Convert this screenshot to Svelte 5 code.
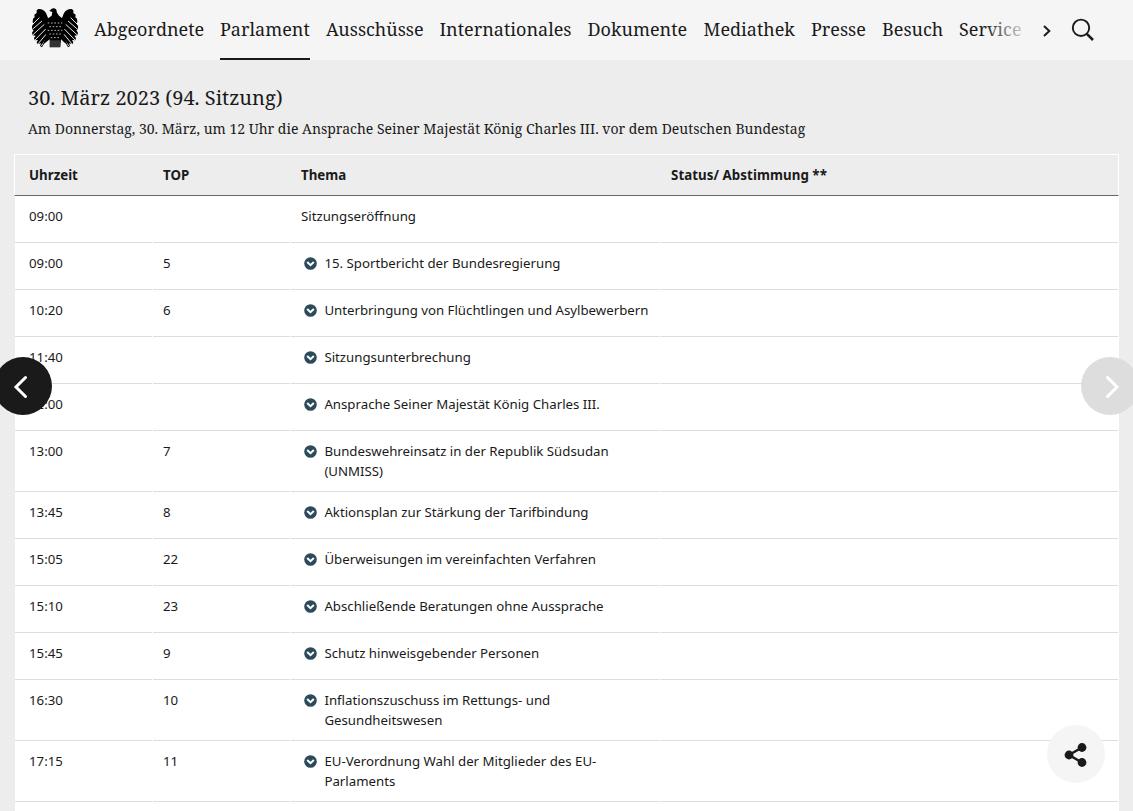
<script>
  const nav = [
    ['Abgeordnete', 110], ['Parlament', 90], ['Ausschüsse', 97.5], ['Internationales', 132],
    ['Dokumente', 100], ['Mediathek', 91.5], ['Presse', 55], ['Besuch', 61], ['Service', 63]
  ];
  const rows = [
    ['09:00', '', 'Sitzungseröffnung', false],
    ['09:00', '5', '15. Sportbericht der Bundesregierung', true],
    ['10:20', '6', 'Unterbringung von Flüchtlingen und Asylbewerbern', true],
    ['11:40', '', 'Sitzungsunterbrechung', true],
    ['12:00', '', 'Ansprache Seiner Majestät König Charles III.', true],
    ['13:00', '7', 'Bundeswehreinsatz in der Republik Südsudan (UNMISS)', true],
    ['13:45', '8', 'Aktionsplan zur Stärkung der Tarifbindung', true],
    ['15:05', '22', 'Überweisungen im vereinfachten Verfahren', true],
    ['15:10', '23', 'Abschließende Beratungen ohne Aussprache', true],
    ['15:45', '9', 'Schutz hinweisgebender Personen', true],
    ['16:30', '10', 'Inflationszuschuss im Rettungs- und Gesundheitswesen', true],
    ['17:15', '11', 'EU-Verordnung Wahl der Mitglieder des EU-Parlaments', true],
    ['', '', '', false]
  ];
</script>

<div class="page">
  <header>
    <svg class="eagle" viewBox="0 0 138 120" width="46" height="40" aria-label="Deutscher Bundestag">
      <g id="wing">
        <path d="M19 3Q34 2 42 15L48 30L50 60L46 84L37 105L30 118L24 114L27 106L17 109L14 103L18 96L8 97L6 90L11 83L2 82L0 74L5 67L0 65L0 54L4 48L2 42L3 32L8 28L7 20L14 15L14 7Z" />
        <path d="M3 48L22 29M0 65L30 39M2 81L37 49M8 97L41 63M17 109L42 79M28 114L40 96" stroke="#f5f5f5" stroke-width="2.8" fill="none" />
      </g>
      <use href="#wing" transform="translate(138 0) scale(-1 1)" />
      <path d="M52 9L59 2Q67-2 73 5L75 14L81 23L94 34L94 83L101 97L107 110L96 103L87 94L85 118H53V94L42 103L32 110L42 85L44 34L59 23L61 12Z" />
      <path d="M47 45H91M52 56H89M47 67H91M52 78H87M56 89H84" stroke="#d8d8d8" stroke-width="2.4" stroke-dasharray="5 5" />
      <path d="M57 97V118M63 97V118M69 97V118M75 97V118M81 97V118" stroke="#999" stroke-width="2" />
    </svg>
    <nav>
      {#each nav as [label, width], i}
        <a class:active={i === 1} style:width="{width}px" href="#top">{label}</a>
      {/each}
      <span class="fade"></span>
    </nav>
    <svg class="more" width="10" height="14" viewBox="0 0 10 14"><path d="M2 2L7.3 7L2 12" /></svg>
    <svg class="search" width="24" height="24" viewBox="0 0 24 24"><circle cx="10" cy="9.8" r="8.2" /><path d="M15.8 15.8L22 22" stroke-width="2.5" /></svg>
  </header>

  <main>
    <h1>30. März 2023 (94. Sitzung)</h1>
    <p class="intro">Am Donnerstag, 30. März, um 12 Uhr die Ansprache Seiner Majestät König Charles III. vor dem Deutschen Bundestag</p>
    <div class="table">
      <div class="row head"><b>Uhrzeit</b><b>TOP</b><b>Thema</b><b>Status/ Abstimmung **</b></div>
      {#each rows as [time, top, topic, link]}
        <div class="row">
          <div>{time}</div>
          <div>{top}</div>
          <div class:topic={link}>
            {#if link}
              <svg width="13" height="13" viewBox="0 0 13 13"><circle cx="6.5" cy="6.5" r="6.3" fill="#2c4a5a" /><path d="M3.2 5L6.5 8.2L9.8 5" /></svg>
            {/if}
            <span>{topic}</span>
          </div>
          <div></div>
        </div>
      {/each}
    </div>
  </main>

  <button class="round prev" aria-label="Zurück"><svg width="16" height="24" viewBox="0 0 16 24"><path d="M12.5 2.5L3 12L12.5 21.5" /></svg></button>
  <button class="round next" aria-label="Weiter"><svg width="16" height="24" viewBox="0 0 16 24"><path d="M3.5 2.5L13 12L3.5 21.5" /></svg></button>
  <button class="round share" aria-label="Teilen"><svg width="24" height="26" viewBox="0 0 24 26"><path d="M18 5.5L5 13L18 20.5" /><circle cx="18" cy="5.5" r="4.4" /><circle cx="5" cy="13" r="4.4" /><circle cx="18" cy="20.5" r="4.4" /></svg></button>
</div>

<style>
  :global(body) { margin: 0; overflow: hidden; }
  .page { position: relative; height: 811px; overflow: hidden; background: #ededed; color: #1a1a1a; font: 13.24px/20px "Noto Sans", sans-serif; }
  header { height: 60px; background: #f5f5f5; display: flex; align-items: center; }
  .eagle { margin: -4px 0 0 32px; flex: none; }
  nav { position: relative; display: flex; gap: 16px; margin-left: 16px; height: 60px; width: 927px; overflow: hidden; }
  nav a { box-sizing: border-box; flex: none; height: 60px; color: inherit; text-decoration: none; white-space: nowrap; font: 18px/58px "Noto Serif", "Droid Serif", "DejaVu Serif Condensed", "DejaVu Serif", serif; }
  .active { border-bottom: 2px solid #1a1a1a; }
  .fade { position: absolute; right: -10px; top: 0; width: 48px; height: 60px; background: linear-gradient(90deg, #f5f5f500, #f5f5f5); }
  .more { margin: 2px 0 0 21px; fill: none; stroke: #1a1a1a; stroke-width: 2; }
  .search { margin-left: 19px; fill: none; stroke: #1a1a1a; stroke-width: 1.9; }
  h1, .intro { margin: 0 0 0 28px; font-family: "Noto Serif", "Droid Serif", "DejaVu Serif Condensed", "DejaVu Serif", serif; font-weight: 400; white-space: nowrap; }
  h1 { padding-top: 24px; font-size: 20px; line-height: 28px; }
  .intro { padding-top: 6px; font-size: 14px; line-height: 22px; }
  .table { margin: 14px 14px 0; }
  .row { display: grid; grid-template-columns: 137px 137px 368px 458px; column-gap: 1px; padding: 0; background: #fff; }
  .row > div { box-sizing: border-box; min-height: 47px; padding: 10px; border-bottom: 1px solid #ddd; }
  .row > :first-child { padding-left: 14px; }
  .row:not(.head) { margin-left: 1px; }
  .head { box-sizing: border-box; height: 42px; border: 1px solid #fff; border-bottom-color: #666; background: #ededed; line-height: 40px; font-size: 13.3px; }
  .head b { padding-left: 10px; font-weight: 700; }
  .head b:last-child { padding-left: 11px; letter-spacing: .06px; }
  .topic { display: flex; }
  .topic svg { flex: none; margin: 4px 7.4px 0 3px; }
  .topic path { fill: none; stroke: #fff; stroke-width: 2; }
  .round { position: absolute; display: flex; align-items: center; justify-content: center; width: 58px; height: 58px; padding: 0; border: 0; border-radius: 50%; }
  .prev, .next { top: 357px; }
  .prev { left: -6px; background: #1a1a1a; }
  .next { left: 1081px; background: #ddd; }
  .prev path, .next path { fill: none; stroke: #fff; stroke-width: 3; stroke-linecap: round; }
  .prev svg { margin: 1px 4px 0 0; }
  .next svg { margin: 1px 0 0 3px; }
  .share { left: 1047px; top: 725px; background: #f5f5f5; }
  .share svg { margin: 1px 0 0; }
  .share path { fill: none; stroke: #1a1a1a; stroke-width: 2.5; }
  .share circle { fill: #1a1a1a; }
</style>
